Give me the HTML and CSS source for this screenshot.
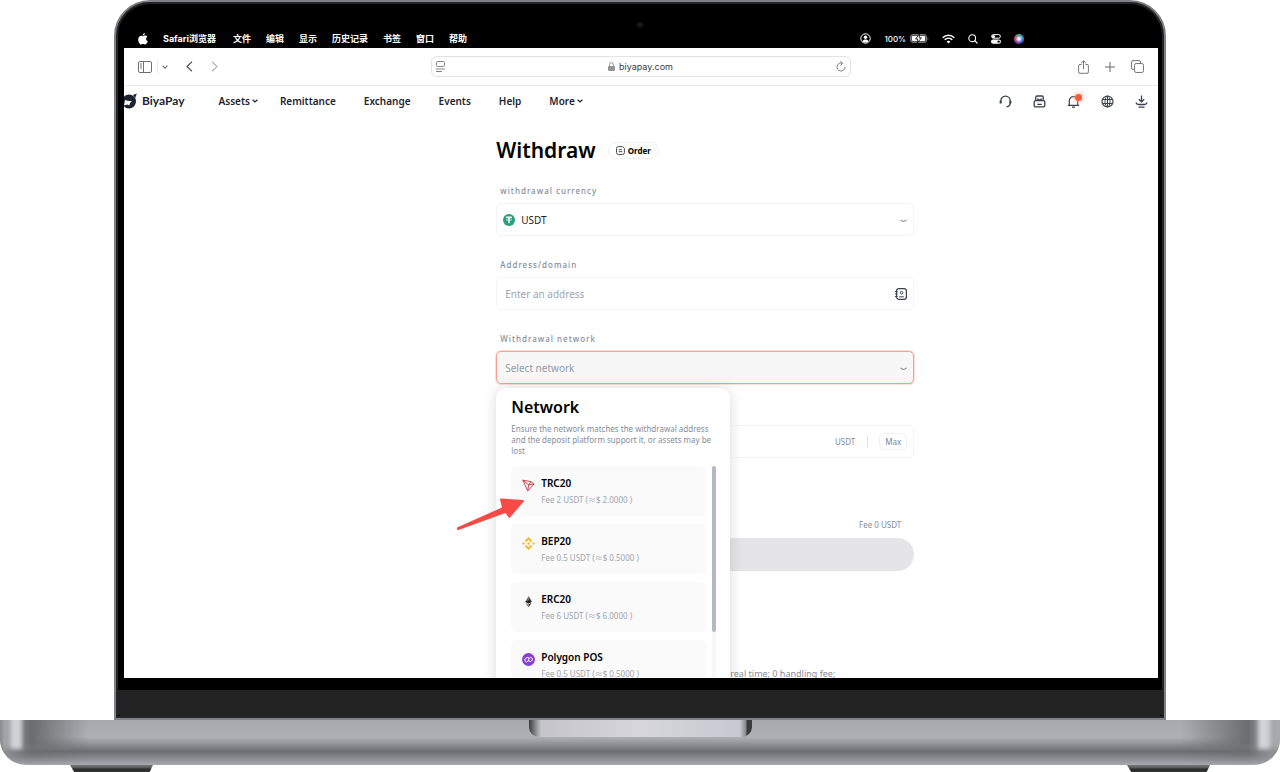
FILE: index.html
```html
<!DOCTYPE html>
<html lang="en">
<head>
    <meta charset="UTF-8">
    <meta name="viewport" content="width=device-width, initial-scale=1.0">
    <title>BiyaPay - Withdraw</title>
    <link rel="stylesheet" href="styles.css">
</head>
<body>
    <div class="lid">
        <span class="camera"></span>
        <div class="menubar">
            <svg class="apple" viewBox="0 0 10 12" fill="#fff"><path d="M6.900 0c.1 1.300-1 2.500-2.200 2.500C4.600 1.300 5.700.1 6.900 0zM5 3.200c.5 0 1.200-.6 2.200-.6.8 0 1.700.4 2.200 1.200-1.900 1.100-1.600 3.700.4 4.500C9.400 9.500 8.300 11.500 7.200 11.500c-.8 0-1.100-.5-2.100-.5s-1.300.5-2.100.5C1.700 11.500.2 8.900.2 6.500c0-2.400 1.500-3.800 2.900-3.800.9 0 1.400.5 1.900.5z"/></svg>
            <span class="app-name">Safari浏览器</span>
            <span>文件</span>
            <span>编辑</span>
            <span>显示</span>
            <span>历史记录</span>
            <span>书签</span>
            <span>窗口</span>
            <span>帮助</span>
            <div class="status">
                <svg width="11" height="11" viewBox="0 0 11 11"><circle cx="5.500" cy="5.500" r="4.700" fill="none" stroke="#fff"/><circle cx="5.500" cy="4.300" r="1.700" fill="#fff"/><path d="M2.500 8.300c.6-2.300 5.400-2.300 6 0-1.300 1.700-4.700 1.700-6 0z" fill="#fff"/></svg>
                <span class="battery">100%
                    <svg width="19" height="9" viewBox="0 0 19 9"><rect x=".5" y=".5" width="16" height="8" rx="2.500" fill="#555" stroke="#777"/><rect x="2" y="2" width="13" height="5" rx="1" fill="#fff"/><path d="M9.500 0L5.500 5h2.300l-.5 4 4.200-5.200H9.200z" fill="#fff" stroke="#000" stroke-width=".8"/><path d="M17.600 3v3c1-.5 1-2.500 0-3z" fill="#999"/></svg>
                </span>
                <svg width="13" height="10" viewBox="0 0 13 10" fill="none" stroke="#fff" stroke-width="1.500"><path d="M.7 3.700c3.200-3.200 8.400-3.200 11.600 0M2.700 5.800c2.200-2.100 5.400-2.100 7.600 0"/><path d="M4.600 7.500c1.100-1 2.700-1 3.800 0L6.500 9.500z" fill="#fff" stroke="none"/></svg>
                <svg width="10" height="10" viewBox="0 0 10 10" fill="none" stroke="#fff" stroke-width="1.100"><circle cx="4.200" cy="4.200" r="3.400"/><path d="M6.700 6.700l2.800 2.800"/></svg>
                <svg width="10" height="10" viewBox="0 0 10 10"><rect x=".6" y=".6" width="8.800" height="3.600" rx="1.800" fill="none" stroke="#fff"/><circle cx="2.500" cy="2.400" r="1.500" fill="#fff"/><rect x="0" y="5.400" width="10" height="4.400" rx="2.200" fill="#fff"/><circle cx="7.600" cy="7.600" r="1.200" fill="#000"/></svg>
                <span class="siri"></span>
            </div>
        </div>

        <div class="browser">
            <div class="toolbar">
                <div class="tools">
                    <button type="button" aria-label="Sidebar"><svg width="14" height="12" viewBox="0 0 14 12" fill="none" stroke="#6f6f6f"><rect x=".5" y=".5" width="13" height="11" rx="1.500"/><path d="M5.500.5v11M2 3h2M2 5h2M2 7h2"/></svg></button>
                    <button type="button" class="tab-groups" aria-label="Tab groups"><svg width="6" height="4" viewBox="0 0 6 4" fill="none" stroke="#6f6f6f" stroke-width="1.100"><path d="M.6.7L3 3.100 5.400.7"/></svg></button>
                    <button type="button" class="back" aria-label="Back"><svg width="7" height="11" viewBox="0 0 7 11" fill="none" stroke="#555" stroke-width="1.200"><path d="M6 .7L1 5.500l5 4.800"/></svg></button>
                    <button type="button" class="forward" aria-label="Forward"><svg width="7" height="11" viewBox="0 0 7 11" fill="none" stroke="#b5b5b5" stroke-width="1.200"><path d="M1 .7l5 4.800-5 4.800"/></svg></button>
                </div>
                <div class="address-bar">
                    <svg width="9" height="11" viewBox="0 0 9 11" fill="none" stroke="#858585"><rect x=".5" y=".5" width="8" height="5" rx="1.200"/><path d="M0 8h9M0 10.500h6"/></svg>
                    <span class="url"><svg width="7" height="9" viewBox="0 0 7 9"><rect y="4" width="7" height="5" rx="1" fill="#949494"/><path d="M1.600 4V2.500a1.900 1.900 0 0 1 3.800 0V4" fill="none" stroke="#949494"/></svg>biyapay.com</span>
                    <button type="button" aria-label="Reload"><svg width="10" height="11" viewBox="0 0 10 11" fill="none" stroke="#7c7c7c"><path d="M6.500 2.300A4 4 0 1 0 9 6M4.300.3l2.400 2-2.200 2.200"/></svg></button>
                </div>
                <div class="tools tools-right">
                    <button type="button" aria-label="Share"><svg width="11" height="14" viewBox="0 0 11 14" fill="none" stroke="#777"><path d="M3.500 4.500H2A1.300 1.300 0 0 0 .6 5.800v6.100A1.300 1.300 0 0 0 2 13.300h7a1.300 1.300 0 0 0 1.400-1.400V5.800A1.300 1.300 0 0 0 9 4.500H7.500M5.500 9V1M3 3.200L5.500.8 8 3.200"/></svg></button>
                    <button type="button" aria-label="New tab"><svg width="10" height="10" viewBox="0 0 10 10" stroke="#666"><path d="M5 0v10M0 5h10"/></svg></button>
                    <button type="button" aria-label="All tabs"><svg width="13" height="13" viewBox="0 0 13 13" fill="none" stroke="#777"><rect x="3.500" y="3.500" width="9" height="9" rx="1.700"/><path d="M3.500 9.500H2A1.400 1.400 0 0 1 .6 8V2A1.400 1.400 0 0 1 2 .6h6A1.400 1.400 0 0 1 9.500 2v1.500"/></svg></button>
                </div>
            </div>

            <header class="header">
                <a href="#" class="logo">
                    <svg width="15" height="16" viewBox="0 0 15 16"><circle cx="7" cy="8.500" r="7" fill="#1d2430"/><path d="M11 2l3.800-1.500L13.300 5z" fill="#1d2430"/><path d="M3 7l2.600.8L10 8.200 8 10l-.8 2.600-2-1.100L2 12.500z" fill="#fff"/></svg>
                    BiyaPay
                </a>
                <nav class="nav">
                    <a href="#" class="has-menu">Assets<svg width="6" height="4" viewBox="0 0 6 4" fill="none" stroke="#1d2430" stroke-width="1.200"><path d="M.6.7L3 3 5.400.7"/></svg></a>
                    <a href="#">Remittance</a>
                    <a href="#">Exchange</a>
                    <a href="#">Events</a>
                    <a href="#">Help</a>
                    <a href="#" class="has-menu">More<svg width="6" height="4" viewBox="0 0 6 4" fill="none" stroke="#1d2430" stroke-width="1.200"><path d="M.6.7L3 3 5.400.7"/></svg></a>
                </nav>
                <div class="actions">
                    <button type="button" aria-label="Support"><svg width="13" height="13" viewBox="0 0 13 13" fill="none" stroke="#3a414d" stroke-width="1.300"><path d="M1.800 8V5.800a4.700 4.700 0 0 1 9.400 0V8c0 2-1.200 3.600-3.700 3.800"/><path d="M1.600 5.800v2.700M11.400 5.800v2.700" stroke-width="2"/></svg></button>
                    <button type="button" aria-label="Orders"><svg width="13" height="13" viewBox="0 0 13 13" fill="none" stroke="#3a414d" stroke-width="1.300"><path d="M2.800 5V2.200c0-.7.500-1.200 1.200-1.200h5c.7 0 1.200.5 1.200 1.200V5M4.300 3.700c1 1.700 3.400 1.700 4.400 0M4.300 9.300h4.400"/><rect x="1.200" y="5.600" width="10.600" height="6.300" rx="1.300"/></svg></button>
                    <button type="button" class="bell" aria-label="Notifications"><svg width="13" height="13" viewBox="0 0 13 13" fill="none" stroke="#3a414d" stroke-width="1.200"><path d="M.8 10.300h11.400M2.300 10.300V5.800a4.200 4.200 0 0 1 8.400 0v4.500M5 12.200h3"/></svg><span class="dot"></span></button>
                    <button type="button" aria-label="Language"><svg width="13" height="13" viewBox="0 0 13 13" fill="none" stroke="#3a414d"><circle cx="6.500" cy="6.500" r="5.500" stroke-width="1.200"/><ellipse cx="6.500" cy="6.500" rx="2.500" ry="5.500"/><path d="M1.500 4.500h10M1.500 8.500h10M6.500 1v11"/></svg></button>
                    <button type="button" aria-label="Download"><svg width="13" height="13" viewBox="0 0 13 13" fill="none" stroke="#3a414d" stroke-width="1.300"><path d="M6.500.5v6M3.800 4.300l2.700 2.600 2.700-2.600M.9 7.500c.4 1.300 1.300 2 2.700 2h5.800c1.400 0 2.300-.7 2.700-2M3.500 12.200h6"/></svg></button>
                </div>
            </header>

            <main class="withdraw">
                <div class="title-row">
                    <h1>Withdraw</h1>
                    <button type="button" class="order-btn"><svg width="9" height="9" viewBox="0 0 9 9" fill="none" stroke="#444b57"><path d="M2.500.6h4L8.400 2.500v4a2 2 0 0 1-2 2h-4a2 2 0 0 1-1.900-2v-4a2 2 0 0 1 2-1.900zM2.700 3.700h3.200M2.700 5.700h3.600"/></svg>Order</button>
                </div>

                <div class="form-group">
                    <label for="currency">withdrawal currency</label>
                    <div class="field">
                        <svg class="coin" width="12" height="12" viewBox="0 0 12 12"><circle cx="6" cy="6" r="6" fill="#26a17b"/><path d="M3.200 3.200h5.600M6 3.200v6" stroke="#fff" stroke-width="1.400"/><ellipse cx="6" cy="5.600" rx="3" ry=".8" fill="none" stroke="#fff" stroke-width=".5"/></svg>
                        <select id="currency">
                            <option>USDT</option>
                        </select>
                        <svg class="arrow" width="7" height="4" viewBox="0 0 7 4" fill="none" stroke="#8e96a3" stroke-width="1.200"><path d="M.5.8c2 2 4 2 6 0"/></svg>
                    </div>
                </div>

                <div class="form-group">
                    <label for="address">Address/domain</label>
                    <div class="field">
                        <input type="text" id="address" placeholder="Enter an address">
                        <button type="button" class="book" aria-label="Address book"><svg width="12" height="12" viewBox="0 0 12 12" fill="none" stroke="#3a414d"><rect x="1.600" y=".6" width="9.800" height="10.800" rx="2.400" stroke-width="1.200"/><path d="M0 3.500h2.500M0 6h2.500M0 8.500h2.500M4.200 8.800h4.600"/><circle cx="6.500" cy="4.700" r="1.300"/></svg></button>
                    </div>
                </div>

                <div class="form-group network-group">
                    <label for="network">Withdrawal network</label>
                    <div class="field field-active">
                        <select id="network">
                            <option>Select network</option>
                        </select>
                        <svg class="arrow" width="7" height="4" viewBox="0 0 7 4" fill="none" stroke="#8e96a3" stroke-width="1.200"><path d="M.5.8c2 2 4 2 6 0"/></svg>
                    </div>

                    <div class="dropdown">
                        <h2>Network</h2>
                        <p>Ensure the network matches the withdrawal address and the deposit platform support it, or assets may be lost</p>
                        <div class="network-scroll">
                            <div class="network-list">
                                <button type="button" class="network">
                                    <svg width="13" height="13" viewBox="0 0 13 13" fill="none" stroke="#c8373d" stroke-width=".9" stroke-linejoin="round"><path d="M.8 1.200l8.400 1.500L12 5 5.800 12zM.8 1.200l5.800 4.600L12 5M9.200 2.700L6.600 5.800 5.800 12"/></svg>
                                    <span class="network-text"><b>TRC20</b><small>Fee 2 USDT (≈$ 2.0000 )</small></span>
                                </button>
                                <button type="button" class="network">
                                    <svg width="13" height="13" viewBox="0 0 13 13" fill="#f3ba2f"><path d="M6.500 0l3.800 3.800-1.400 1.400-2.400-2.400-2.400 2.400-1.400-1.400zM6.500 13L2.700 9.200l1.400-1.400 2.400 2.400 2.400-2.400 1.400 1.400zM1.400 5.100l1.400 1.400-1.400 1.400L0 6.500zM11.600 5.100L13 6.500l-1.400 1.400-1.400-1.400zM6.500 5l1.500 1.500L6.500 8 5 6.500z"/></svg>
                                    <span class="network-text"><b>BEP20</b><small>Fee 0.5 USDT (≈$ 0.5000 )</small></span>
                                </button>
                                <button type="button" class="network">
                                    <svg width="13" height="13" viewBox="0 0 13 13"><path d="M6.500 1L3.200 6.700l3.300 1.900z" fill="#777"/><path d="M6.500 1l3.300 5.700-3.300 1.900z" fill="#333"/><path d="M3.200 6.700l3.300-1.500 3.300 1.500-3.300 1.900z" fill="#222"/><path d="M3.200 7.500l3.300 4.700V9.400z" fill="#777"/><path d="M9.800 7.500l-3.300 4.700V9.400z" fill="#333"/></svg>
                                    <span class="network-text"><b>ERC20</b><small>Fee 6 USDT (≈$ 6.0000 )</small></span>
                                </button>
                                <button type="button" class="network">
                                    <svg width="13" height="13" viewBox="0 0 13 13"><circle cx="6.500" cy="6.500" r="6.500" fill="#8a3ddb"/><path d="M7.300 5.200L5 4.500 2.900 5.900v2L4.600 9l2-1.200V5.500l2-1.200 1.700 1v2L8.400 8.500 5.900 7.600" fill="none" stroke="#fff" stroke-width=".9" stroke-linejoin="round"/></svg>
                                    <span class="network-text"><b>Polygon POS</b><small>Fee 0.5 USDT (≈$ 0.5000 )</small></span>
                                </button>
                            </div>
                            <div class="scrollbar"><div class="thumb"></div></div>
                        </div>
                        <svg class="pointer" width="70" height="34" viewBox="0 0 70 34"><path d="M2 29.500L47 9.500 45 1.500q0-1 1.200-1L68 2q1.500.3.700 1.500L55 19.500q-1 1-1.500-.2L50.500 15 3.500 32q-1 .3-1.400-.6z" fill="#f84a46"/></svg>
                    </div>
                </div>

                <div class="form-group">
                    <div class="field amount-field">
                        <input type="text" id="amount" aria-label="Amount">
                        <span class="unit">USDT</span>
                        <button type="button" class="max-btn">Max</button>
                    </div>
                </div>

                <div class="fee">Fee 0 USDT</div>
                <button type="submit" class="submit-btn" aria-label="Withdraw" disabled></button>
                <p class="note">real time; 0 handling fee;</p>
            </main>
        </div>
        <div class="chin"></div>
    </div>

    <div class="base">
        <div class="notch"></div>
    </div>
    <div class="feet">
        <span></span>
        <span></span>
    </div>
</body>
</html>
```

FILE: styles.css
```css
* {
    box-sizing: border-box;
}
body {
    margin: 0;
    height: 100vh;
    min-height: 480px;
    display: flex;
    flex-direction: column;
    overflow: hidden;
    background-color: #fff;
    font-family: "Noto Sans", "Noto Sans CJK SC", sans-serif;
    color: #1d2430;
}
h1, h2, p {
    margin: 0;
}
a {
    color: inherit;
    text-decoration: none;
}
button, input, select {
    font: inherit;
    color: inherit;
    margin: 0;
    padding: 0;
    border: none;
    background: none;
}
button {
    cursor: pointer;
}
svg {
    display: block;
    flex: none;
}

/* Laptop lid */
.lid {
    position: relative;
    flex: 1;
    min-height: 0;
    margin: 0 114px;
    padding: 0 2px 2px;
    display: flex;
    flex-direction: column;
    border: 2px solid #808185;
    border-radius: 36px 36px 0 0;
    background-color: #000;
    box-shadow: inset 0 0 0 2px #24252a;
}
.camera {
    position: absolute;
    top: 20px;
    left: calc(50% - 3px);
    width: 6px;
    height: 6px;
    border-radius: 50%;
    background-color: #15171c;
}
.menubar {
    flex: none;
    height: 46px;
    padding: 27px 138px 0 20px;
    display: flex;
    align-items: center;
    gap: 15px;
    color: #fff;
    font-family: Inter, "Noto Sans CJK SC", sans-serif;
    font-size: 9px;
    font-weight: 600;
    white-space: nowrap;
}
.apple {
    width: 10px;
    height: 12px;
}
.app-name {
    margin-right: 2px;
    font-weight: 700;
}
.status {
    margin-left: auto;
    display: flex;
    align-items: center;
    gap: 13px;
    font-size: 8px;
    font-weight: 500;
}
.battery {
    display: flex;
    align-items: center;
    gap: 4px;
}
.siri {
    width: 10px;
    height: 10px;
    border-radius: 50%;
    background: radial-gradient(circle, #fff 10%, transparent 50%), conic-gradient(#3fae8e, #3c8fe0, #3558c0, #8b3fb0, #d64a70, #3fae8e);
}

/* Browser window */
.browser {
    flex: 1;
    min-height: 0;
    margin: 0 4px 0 6px;
    overflow: hidden;
    background-color: #fff;
}
.toolbar {
    height: 38px;
    padding: 0 14px;
    display: grid;
    grid-template-columns: 1fr minmax(0, 420px) 1fr;
    align-items: center;
    border-bottom: 1px solid #ececec;
}
.tools {
    display: flex;
    align-items: center;
}
.tab-groups {
    margin-left: 5px;
    padding: 5px 0 5px 4px;
    border-left: 1px solid #ececec;
}
.back {
    margin-left: 18px;
}
.forward {
    margin-left: 18px;
}
.tools-right {
    justify-content: flex-end;
    gap: 16px;
}
.address-bar {
    height: 21px;
    padding: 0 4px;
    display: flex;
    align-items: center;
    justify-content: space-between;
    border: 1px solid #e3e3e3;
    border-radius: 6px;
}
.url {
    display: flex;
    align-items: center;
    gap: 4px;
    font-family: Inter, sans-serif;
    font-size: 9px;
    color: #3c3c3c;
}

/* Site header */
.header {
    height: 30px;
    padding-right: 10px;
    display: flex;
    align-items: center;
    font-size: 10px;
    line-height: 14px;
    font-weight: 600;
}
.logo {
    margin-left: -2px;
    display: flex;
    align-items: center;
    gap: 5px;
    font-family: Lato, sans-serif;
    font-size: 12px;
    font-weight: 700;
}
.nav {
    margin-left: 34px;
    display: flex;
    gap: 28px;
}
.has-menu {
    display: flex;
    align-items: center;
    gap: 2px;
}
.has-menu svg {
    margin-right: -6px;
}
.actions {
    margin-left: auto;
    display: flex;
    gap: 21px;
}
.bell {
    position: relative;
}
.dot {
    position: absolute;
    top: -1px;
    right: -2px;
    width: 7px;
    height: 7px;
    border-radius: 50%;
    background-color: #ff5a36;
    box-shadow: 0 0 5px 1px #ffb8a8;
}

/* Withdraw form */
.withdraw {
    width: 418px;
    max-width: 60%;
    margin-left: 36%;
    padding-top: 19px;
}
.title-row {
    margin-bottom: 19px;
    display: flex;
    align-items: center;
    gap: 12px;
}
h1 {
    font-size: 21px;
    line-height: 30px;
    font-weight: 600;
    color: #000;
}
.order-btn {
    height: 17px;
    padding: 0 7px;
    display: flex;
    align-items: center;
    gap: 3px;
    border: 1px solid #efeff1;
    border-radius: 9px;
    font-size: 8px;
    font-weight: 700;
    color: #000;
}
.form-group label {
    display: block;
    margin-bottom: 6px;
    padding-left: 4px;
    font-size: 8px;
    line-height: 13px;
    font-weight: 500;
    letter-spacing: 1px;
    color: #868d9a;
}
.field {
    height: 33px;
    margin-bottom: 22px;
    padding: 0 6px 0 8px;
    display: flex;
    align-items: center;
    border: 1px solid #f4f4f5;
    border-radius: 5px;
    font-size: 10px;
}
.field select, .field input {
    flex: 1;
    min-width: 0;
    height: 100%;
    appearance: none;
    outline: none;
}
.field input::placeholder {
    color: #a0a5af;
}
.coin {
    margin-left: -2px;
    margin-right: 6px;
}
.arrow {
    margin-top: 3px;
}
.field-active {
    border-color: #f9a08c;
    background-color: #f7f7f7;
    box-shadow: 0 0 0 1px #fde0d9;
}
.field-active select {
    color: #969ba6;
}

/* Network dropdown */
.network-group {
    position: relative;
}
.dropdown {
    position: absolute;
    z-index: 1;
    top: 56px;
    left: 0;
    width: 234px;
    padding: 8px 14px 20px 15px;
    border-radius: 10px;
    background-color: #fff;
    box-shadow: 0 0 14px rgba(0, 0, 0, 0.15);
}
h2 {
    font-size: 16px;
    line-height: 22px;
    font-weight: 600;
    color: #000;
}
.dropdown p {
    margin: 5px 0 10px;
    font-size: 8px;
    line-height: 11px;
    color: #868d9a;
}
.network-scroll {
    display: flex;
    gap: 6px;
}
.network-list {
    flex: 1;
    display: flex;
    flex-direction: column;
    gap: 8px;
}
.network {
    height: 50px;
    padding: 0 11px;
    display: flex;
    align-items: center;
    gap: 6px;
    border-radius: 5px;
    background-color: #fafafa;
    text-align: left;
}
.network > svg {
    margin-bottom: 12px;
}
.network-text {
    display: flex;
    flex-direction: column;
    gap: 4px;
}
.network b {
    font-size: 10px;
    line-height: 14px;
    font-weight: 600;
    color: #000;
}
.network small {
    font-size: 8px;
    line-height: 12px;
    color: #a0a5af;
}
.scrollbar {
    width: 4px;
    border-radius: 2px;
    background-color: #f7f7f7;
}
.thumb {
    height: 74%;
    border-radius: 2px;
    background-color: #b3b9c3;
}
.pointer {
    position: absolute;
    top: 110px;
    left: -41px;
}

/* Amount and submit */
.amount-field {
    margin-top: 41px;
}
.unit {
    padding-right: 12px;
    border-right: 1px solid #e0e2e5;
    font-size: 8px;
    line-height: 11px;
    color: #868d9a;
}
.max-btn {
    height: 17px;
    margin-left: 11px;
    padding: 0 5px;
    border: 1px solid #f0f0f2;
    border-radius: 5px;
    font-size: 8px;
    color: #7d8492;
}
.fee {
    margin-top: 61px;
    padding-right: 13px;
    text-align: right;
    font-size: 8px;
    line-height: 12px;
    color: #868d9a;
}
.submit-btn {
    display: block;
    width: 100%;
    height: 33px;
    margin-top: 7px;
    border-radius: 17px;
    background-color: #e5e5e7;
}
.note {
    margin-top: 96px;
    padding-left: 234px;
    font-size: 9px;
    line-height: 14px;
    color: #868d9a;
    white-space: nowrap;
}

/* Laptop body */
.chin {
    flex: none;
    height: 26px;
    margin-top: 12px;
    border-radius: 0 0 3px 3px;
    background-color: #232323;
}
.base {
    position: relative;
    flex: none;
    height: 45px;
    overflow: hidden;
    border-radius: 0 0 26px 26px;
    background: linear-gradient(#a8a9ae, #afb0b5 38%, #a2a3a8 45%, #6c6d72 70%, #808186 80%, #a9aaaf);
}
.base::before {
    content: "";
    position: absolute;
    inset: 0;
    background: linear-gradient(90deg, #88898d, #a5a6ab 5px, #77787c 24px, #6b6c70 32px, rgba(120, 121, 126, 0) 88px, rgba(120, 121, 126, 0) calc(100% - 98px), #6b6c70 calc(100% - 32px), #a5a6ab calc(100% - 10px), #a9aaaf);
    mask-image: linear-gradient(#000 50%, transparent);
}
.base::after {
    content: "";
    position: absolute;
    inset: -6px 10px 16px;
    border: solid #d2d2d9;
    border-width: 0 12px;
    border-radius: 4px;
    filter: blur(2px);
}
.notch {
    position: relative;
    z-index: 1;
    width: 223px;
    height: 17px;
    margin: 0 auto;
    border-radius: 0 0 10px 10px;
    background: linear-gradient(90deg, #3a3b3e, #77787c 5px, #c4c4ca 12px, #d6d6dc 50%, #c8c8d0 calc(100% - 12px), #85868b calc(100% - 6px), #3a3b3e calc(100% - 5px));
}
.feet {
    flex: none;
    height: 7px;
    padding: 0 70px;
    display: flex;
    justify-content: space-between;
}
.feet span {
    width: 83px;
    background: linear-gradient(#77787a, #555 3px, #2b2d2c 4px, #333534);
    clip-path: polygon(0 0, 100% 0, 96% 100%, 5% 100%);
}
```
